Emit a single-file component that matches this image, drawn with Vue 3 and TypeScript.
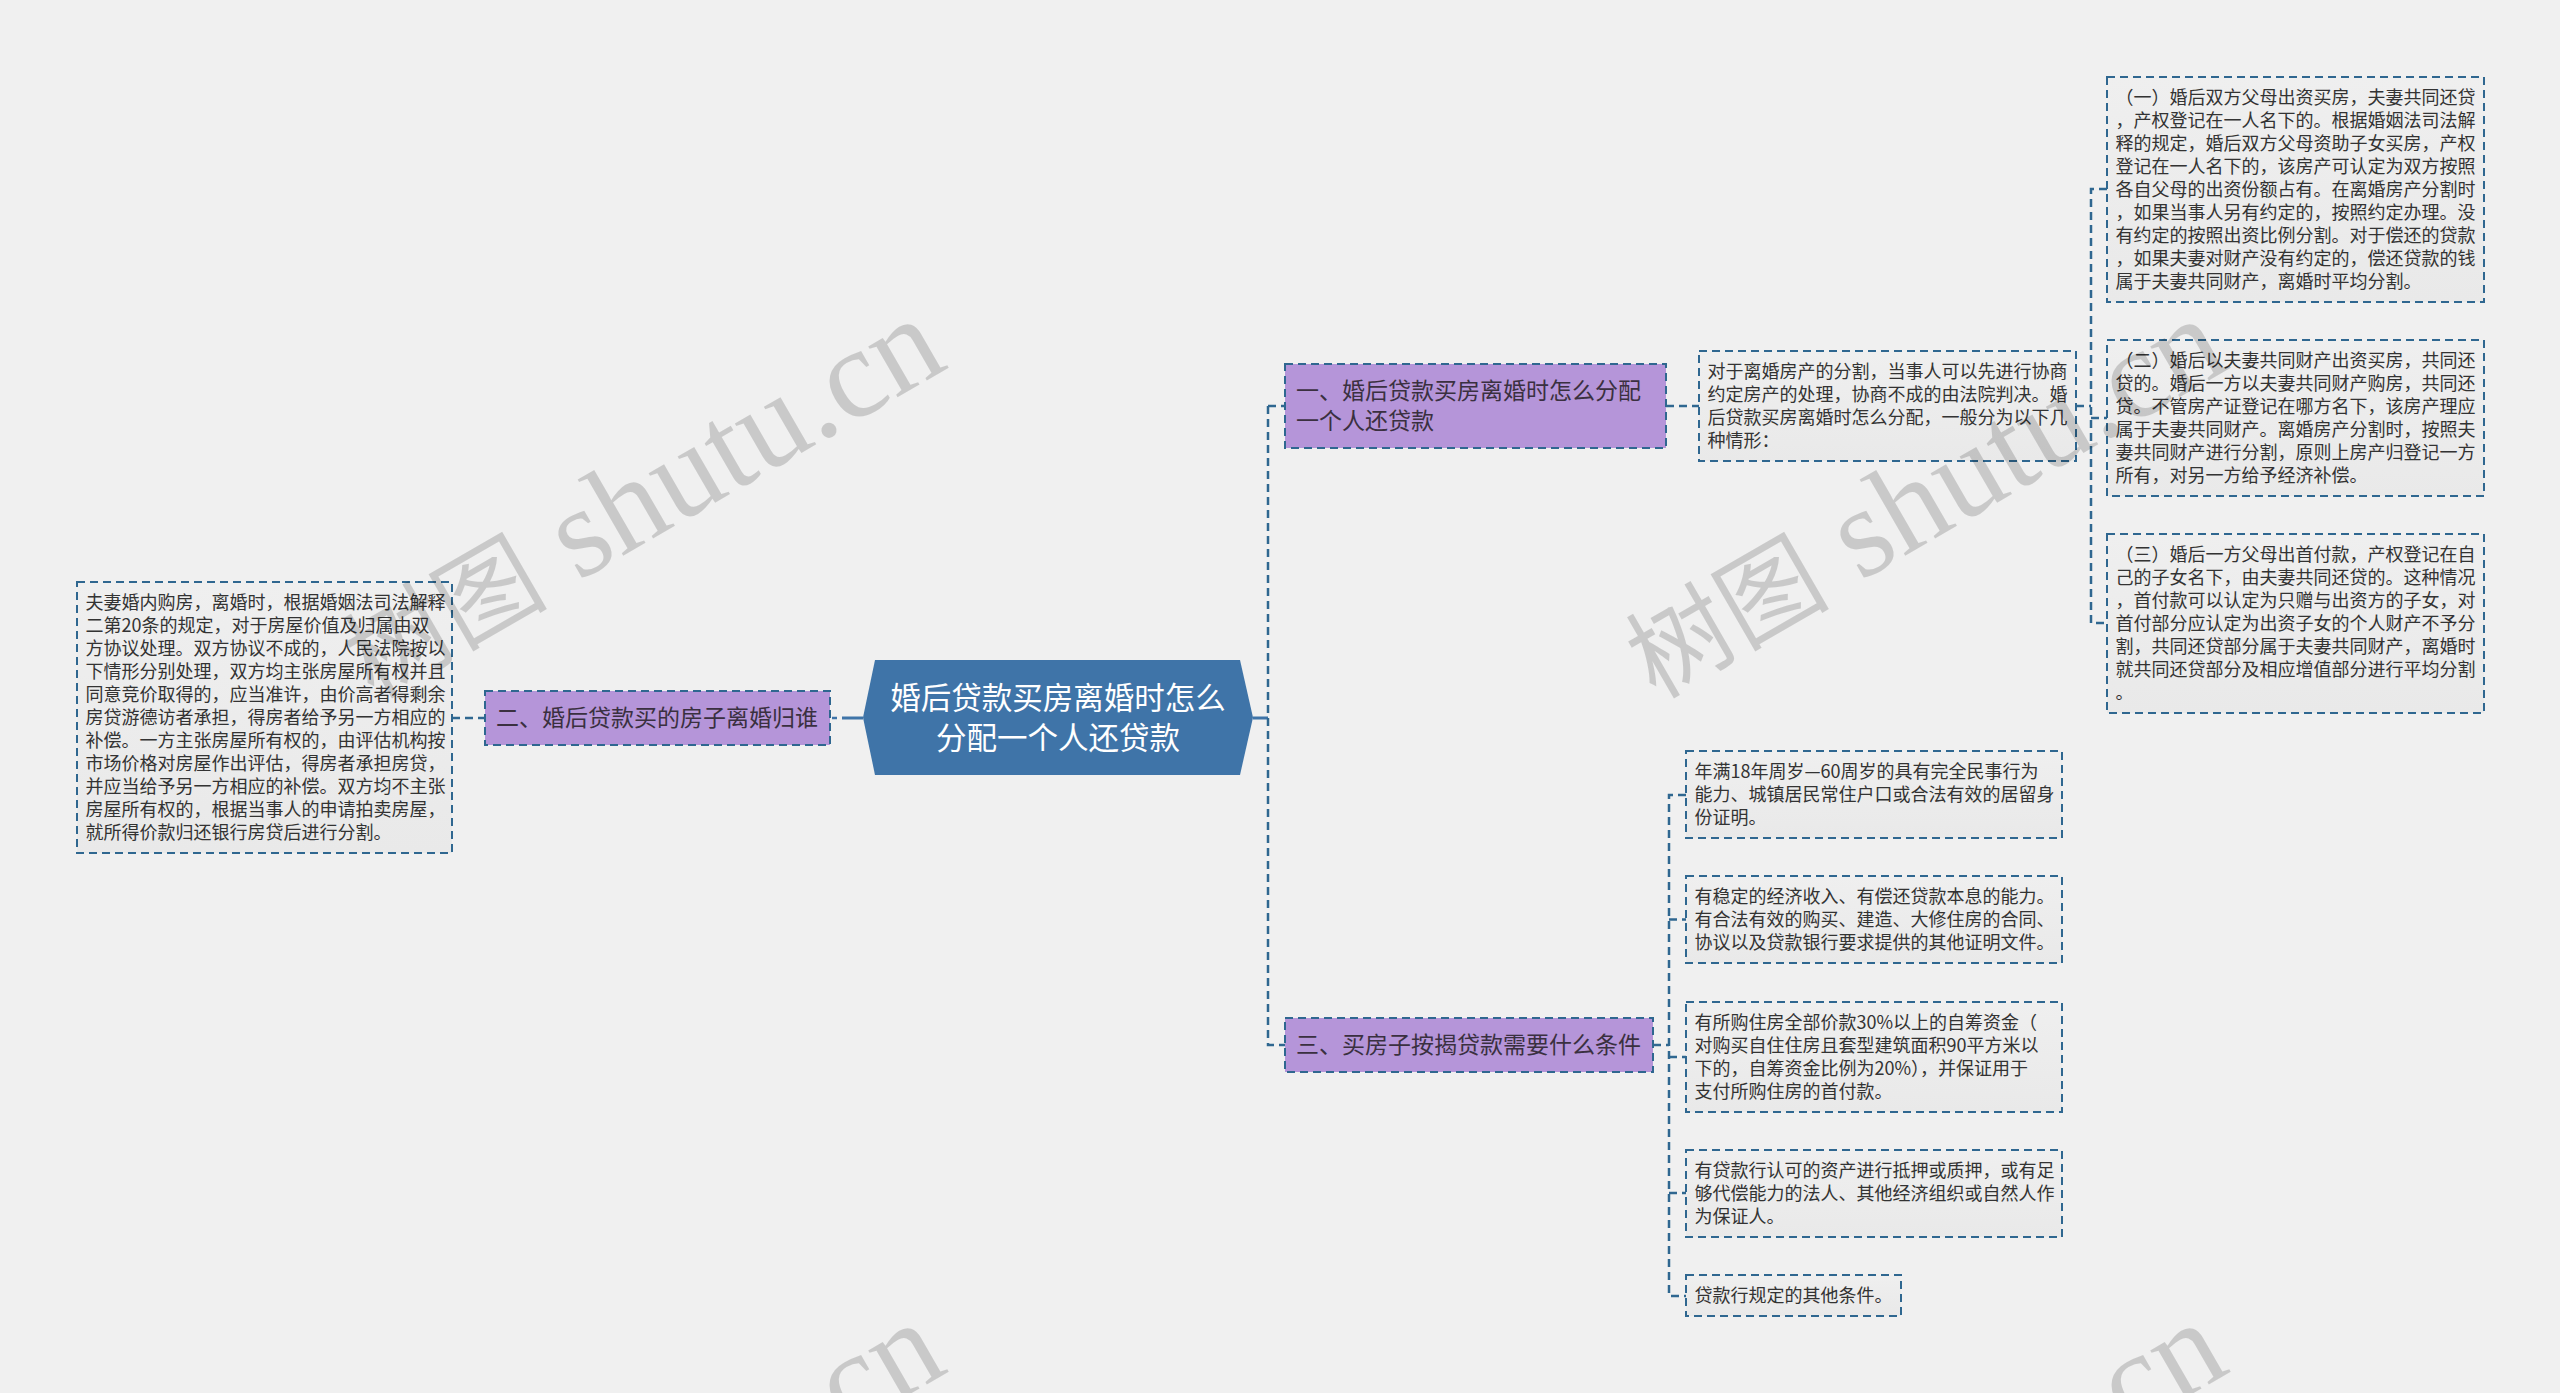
<script setup lang="ts">
type Kind = 'root' | 'topic' | 'detail'
interface MindNode { kind: Kind; x: number; y: number; w: number; h: number; text: string[] }

const nodes: MindNode[] = [
  { kind: 'root', x: 863, y: 660, w: 390, h: 115, text: ['婚后贷款买房离婚时怎么', '分配一个人还贷款'] },
  { kind: 'topic', x: 1285, y: 364, w: 381, h: 84, text: ['一、婚后贷款买房离婚时怎么分配', '一个人还贷款'] },
  { kind: 'topic', x: 485, y: 691, w: 345, h: 54, text: ['二、婚后贷款买的房子离婚归谁'] },
  { kind: 'topic', x: 1285, y: 1018, w: 368, h: 54, text: ['三、买房子按揭贷款需要什么条件'] },
  { kind: 'detail', x: 77, y: 582, w: 375, h: 271, text: [
    '夫妻婚内购房，离婚时，根据婚姻法司法解释', '二第20条的规定，对于房屋价值及归属由双', '方协议处理。双方协议不成的，人民法院按以',
    '下情形分别处理，双方均主张房屋所有权并且', '同意竞价取得的，应当准许，由价高者得剩余', '房贷游德访者承担，得房者给予另一方相应的',
    '补偿。一方主张房屋所有权的，由评估机构按', '市场价格对房屋作出评估，得房者承担房贷，', '并应当给予另一方相应的补偿。双方均不主张',
    '房屋所有权的，根据当事人的申请拍卖房屋，', '就所得价款归还银行房贷后进行分割。'] },
  { kind: 'detail', x: 1699, y: 351, w: 377, h: 110, text: [
    '对于离婚房产的分割，当事人可以先进行协商', '约定房产的处理，协商不成的由法院判决。婚', '后贷款买房离婚时怎么分配，一般分为以下几', '种情形：'] },
  { kind: 'detail', x: 2107, y: 77, w: 377, h: 225, text: [
    '（一）婚后双方父母出资买房，夫妻共同还贷', '，产权登记在一人名下的。根据婚姻法司法解', '释的规定，婚后双方父母资助子女买房，产权',
    '登记在一人名下的，该房产可认定为双方按照', '各自父母的出资份额占有。在离婚房产分割时', '，如果当事人另有约定的，按照约定办理。没',
    '有约定的按照出资比例分割。对于偿还的贷款', '，如果夫妻对财产没有约定的，偿还贷款的钱', '属于夫妻共同财产，离婚时平均分割。'] },
  { kind: 'detail', x: 2107, y: 340, w: 377, h: 156, text: [
    '（二）婚后以夫妻共同财产出资买房，共同还', '贷的。婚后一方以夫妻共同财产购房，共同还', '贷。不管房产证登记在哪方名下，该房产理应',
    '属于夫妻共同财产。离婚房产分割时，按照夫', '妻共同财产进行分割，原则上房产归登记一方', '所有，对另一方给予经济补偿。'] },
  { kind: 'detail', x: 2107, y: 534, w: 377, h: 179, text: [
    '（三）婚后一方父母出首付款，产权登记在自', '己的子女名下，由夫妻共同还贷的。这种情况', '，首付款可以认定为只赠与出资方的子女，对',
    '首付部分应认定为出资子女的个人财产不予分', '割，共同还贷部分属于夫妻共同财产，离婚时', '就共同还贷部分及相应增值部分进行平均分割', '。'] },
  { kind: 'detail', x: 1686, y: 751, w: 376, h: 87, text: [
    '年满18年周岁—60周岁的具有完全民事行为', '能力、城镇居民常住户口或合法有效的居留身', '份证明。'] },
  { kind: 'detail', x: 1686, y: 876, w: 376, h: 87, text: [
    '有稳定的经济收入、有偿还贷款本息的能力。', '有合法有效的购买、建造、大修住房的合同、', '协议以及贷款银行要求提供的其他证明文件。'] },
  { kind: 'detail', x: 1686, y: 1002, w: 376, h: 110, text: [
    '有所购住房全部价款30%以上的自筹资金（', '对购买自住住房且套型建筑面积90平方米以', '下的，自筹资金比例为20%），并保证用于', '支付所购住房的首付款。'] },
  { kind: 'detail', x: 1686, y: 1150, w: 376, h: 87, text: [
    '有贷款行认可的资产进行抵押或质押，或有足', '够代偿能力的法人、其他经济组织或自然人作', '为保证人。'] },
  { kind: 'detail', x: 1686, y: 1275, w: 215, h: 41, text: ['贷款行规定的其他条件。'] },
]

const outlined = nodes.filter((n) => n.kind !== 'root')

const links: string[] = [
  'M452 718H485',
  'M1666 406H1699',
  'M2076 406H2091',
  'M1268 406H1285M1268 406V1045H1285',
  'M1653 1045H1669',
  'M2107 189H2091V623H2107M2091 418H2107',
  'M1686 795H1669V1296H1686M1669 919.5H1686M1669 1057H1686M1669 1193H1686',
]

const marks = [
  { x: 384, y: 718 },
  { x: 1666, y: 718 },
  { x: 384, y: 1722 },
  { x: 1666, y: 1722 },
]

function nodeStyle(n: MindNode) {
  return { left: `${n.x}px`, top: `${n.y}px`, width: `${n.w}px`, height: `${n.h}px` }
}
function markStyle(m: { x: number; y: number }) {
  return { left: `${m.x}px`, top: `${m.y}px` }
}
</script>

<template>
  <main class="canvas">
    <div
      v-for="(n, i) in nodes"
      :key="i"
      class="node"
      :class="`node--${n.kind}`"
      :style="nodeStyle(n)"
    >{{ n.text.join('\n') }}</div>

    <svg class="wires" width="2560" height="1393" viewBox="0 0 2560 1393" fill="none">
      <path class="wire-solid" d="M842 718H863M1253 718H1268" />
      <path class="wire-solid-thin" d="M832 718H837" />
      <path v-for="(d, i) in links" :key="i" class="wire" :d="d" />
      <rect
        v-for="(n, i) in outlined"
        :key="'r' + i"
        class="outline"
        :x="n.x"
        :y="n.y"
        :width="n.w"
        :height="n.h"
      />
    </svg>

    <div v-for="(m, i) in marks" :key="'m' + i" class="mark" :style="markStyle(m)"><span class="mark-cjk">树图</span> shutu.cn</div>
  </main>
</template>

<style scoped>
.canvas {
  position: relative;
  width: 2560px;
  height: 1393px;
  overflow: hidden;
  background: #f0f0f0;
  font-family: "Noto Sans CJK SC", "Noto Sans", sans-serif;
}
.node {
  position: absolute;
  box-sizing: border-box;
  white-space: pre;
  color: #333;
}
.node--root {
  display: flex;
  align-items: center;
  justify-content: center;
  text-align: center;
  padding-bottom: 4px;
  color: #fff;
  font-size: 30.5px;
  line-height: 40px;
  background: #3f74a8;
  clip-path: polygon(12px 0, 377px 0, 100% 50%, 377px 100%, 12px 100%, 0 50%);
}
.node--topic {
  padding: 10px 11px;
  font-size: 23px;
  line-height: 30px;
  background: #b595d9;
  color: #3a3040;
}
.node--detail {
  padding: 8px 8px 8px 8.5px;
  font-size: 18px;
  line-height: 23px;
  background: linear-gradient(#efefef, #e9e9e9);
}
.wires {
  position: absolute;
  left: 0;
  top: 0;
}
.wire,
.outline {
  stroke: #2f6790;
  stroke-dasharray: 8 5;
}
.wire {
  stroke-width: 2.5;
}
.outline {
  stroke-width: 2;
}
.wire-solid {
  stroke: #3f74a8;
  stroke-width: 3;
}
.wire-solid-thin {
  stroke: #3f74a8;
  stroke-width: 2.5;
}
.mark {
  position: absolute;
  transform-origin: 0 100%;
  transform: translateY(-100%) rotate(-30deg);
  white-space: nowrap;
  font-family: "Liberation Serif", "Noto Sans CJK SC", serif;
  font-size: 128px;
  line-height: 1;
  color: rgba(0, 0, 0, 0.16);
  pointer-events: none;
}
.mark-cjk {
  font-size: 102px;
}
</style>

<style>
html, body { background: #f0f0f0; }
</style>
